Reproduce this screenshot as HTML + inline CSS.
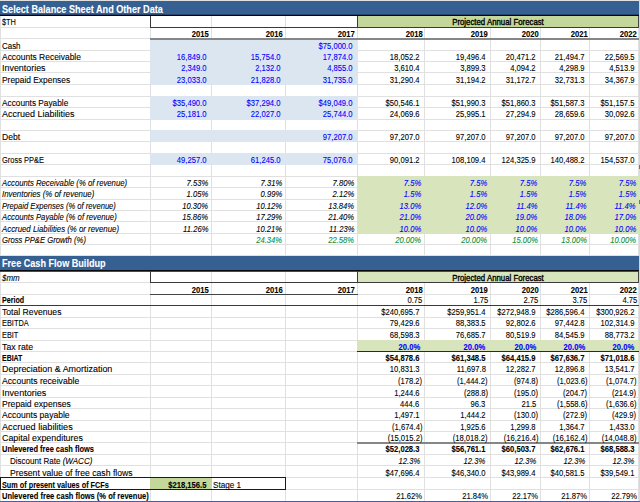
<!DOCTYPE html>
<html><head><meta charset="utf-8"><style>
html,body{margin:0;padding:0;background:#fff;}
body{width:640px;height:502px;position:relative;overflow:hidden;font-family:"Liberation Sans",sans-serif;}
.r{position:absolute;}
.t{position:absolute;white-space:nowrap;line-height:normal;-webkit-text-stroke:0.1px currentColor;}
</style></head><body>
<div class="r" style="left:0px;top:15px;width:640px;height:1px;background:#e0e0e0"></div>
<div class="r" style="left:0px;top:27px;width:640px;height:1px;background:#e0e0e0"></div>
<div class="r" style="left:0px;top:38px;width:640px;height:1px;background:#e0e0e0"></div>
<div class="r" style="left:0px;top:50px;width:640px;height:1px;background:#e0e0e0"></div>
<div class="r" style="left:0px;top:61px;width:640px;height:1px;background:#e0e0e0"></div>
<div class="r" style="left:0px;top:72px;width:640px;height:1px;background:#e0e0e0"></div>
<div class="r" style="left:0px;top:84px;width:640px;height:1px;background:#e0e0e0"></div>
<div class="r" style="left:0px;top:96px;width:640px;height:1px;background:#e0e0e0"></div>
<div class="r" style="left:0px;top:107px;width:640px;height:1px;background:#e0e0e0"></div>
<div class="r" style="left:0px;top:119px;width:640px;height:1px;background:#e0e0e0"></div>
<div class="r" style="left:0px;top:130px;width:640px;height:1px;background:#e0e0e0"></div>
<div class="r" style="left:0px;top:141px;width:640px;height:1px;background:#e0e0e0"></div>
<div class="r" style="left:0px;top:153px;width:640px;height:1px;background:#e0e0e0"></div>
<div class="r" style="left:0px;top:164px;width:640px;height:1px;background:#e0e0e0"></div>
<div class="r" style="left:0px;top:176px;width:640px;height:1px;background:#e0e0e0"></div>
<div class="r" style="left:0px;top:187px;width:640px;height:1px;background:#e0e0e0"></div>
<div class="r" style="left:0px;top:199px;width:640px;height:1px;background:#e0e0e0"></div>
<div class="r" style="left:0px;top:210px;width:640px;height:1px;background:#e0e0e0"></div>
<div class="r" style="left:0px;top:221px;width:640px;height:1px;background:#e0e0e0"></div>
<div class="r" style="left:0px;top:233px;width:640px;height:1px;background:#e0e0e0"></div>
<div class="r" style="left:0px;top:244px;width:640px;height:1px;background:#e0e0e0"></div>
<div class="r" style="left:0px;top:255px;width:640px;height:1px;background:#e0e0e0"></div>
<div class="r" style="left:0px;top:270px;width:640px;height:1px;background:#e0e0e0"></div>
<div class="r" style="left:0px;top:282px;width:640px;height:1px;background:#e0e0e0"></div>
<div class="r" style="left:0px;top:294px;width:640px;height:1px;background:#e0e0e0"></div>
<div class="r" style="left:0px;top:305px;width:640px;height:1px;background:#e0e0e0"></div>
<div class="r" style="left:0px;top:317px;width:640px;height:1px;background:#e0e0e0"></div>
<div class="r" style="left:0px;top:328px;width:640px;height:1px;background:#e0e0e0"></div>
<div class="r" style="left:0px;top:340px;width:640px;height:1px;background:#e0e0e0"></div>
<div class="r" style="left:0px;top:351px;width:640px;height:1px;background:#e0e0e0"></div>
<div class="r" style="left:0px;top:362px;width:640px;height:1px;background:#e0e0e0"></div>
<div class="r" style="left:0px;top:374px;width:640px;height:1px;background:#e0e0e0"></div>
<div class="r" style="left:0px;top:385px;width:640px;height:1px;background:#e0e0e0"></div>
<div class="r" style="left:0px;top:397px;width:640px;height:1px;background:#e0e0e0"></div>
<div class="r" style="left:0px;top:408px;width:640px;height:1px;background:#e0e0e0"></div>
<div class="r" style="left:0px;top:420px;width:640px;height:1px;background:#e0e0e0"></div>
<div class="r" style="left:0px;top:431px;width:640px;height:1px;background:#e0e0e0"></div>
<div class="r" style="left:0px;top:442px;width:640px;height:1px;background:#e0e0e0"></div>
<div class="r" style="left:0px;top:454px;width:640px;height:1px;background:#e0e0e0"></div>
<div class="r" style="left:0px;top:465px;width:640px;height:1px;background:#e0e0e0"></div>
<div class="r" style="left:0px;top:477px;width:640px;height:1px;background:#e0e0e0"></div>
<div class="r" style="left:0px;top:489px;width:640px;height:1px;background:#e0e0e0"></div>
<div class="r" style="left:0px;top:501px;width:640px;height:1px;background:#e0e0e0"></div>
<div class="r" style="left:0px;top:0px;width:640px;height:1px;background:#e0e0e0"></div>
<div class="r" style="left:0px;top:0px;width:1px;height:502px;background:#e0e0e0"></div>
<div class="r" style="left:150px;top:0px;width:1px;height:502px;background:#e0e0e0"></div>
<div class="r" style="left:211px;top:0px;width:1px;height:502px;background:#e0e0e0"></div>
<div class="r" style="left:285px;top:0px;width:1px;height:502px;background:#e0e0e0"></div>
<div class="r" style="left:357px;top:0px;width:1px;height:502px;background:#e0e0e0"></div>
<div class="r" style="left:424px;top:0px;width:1px;height:502px;background:#e0e0e0"></div>
<div class="r" style="left:490px;top:0px;width:1px;height:502px;background:#e0e0e0"></div>
<div class="r" style="left:540px;top:0px;width:1px;height:502px;background:#e0e0e0"></div>
<div class="r" style="left:589px;top:0px;width:1px;height:502px;background:#e0e0e0"></div>
<div class="r" style="left:638px;top:0px;width:1px;height:502px;background:#e0e0e0"></div>
<div class="r" style="left:639px;top:0px;width:1px;height:502px;background:#d6d6d6"></div>
<div class="r" style="left:0px;top:1px;width:639px;height:14px;background:#366092"></div>
<div class="r" style="left:0px;top:14px;width:639px;height:1px;background:#26456e"></div>
<div class="r" style="left:0px;top:15px;width:639px;height:1px;background:#050505"></div>
<div class="r" style="left:0px;top:256px;width:639px;height:14px;background:#366092"></div>
<div class="r" style="left:0px;top:270px;width:639px;height:1px;background:#0a0a0a"></div>
<div class="r" style="left:0px;top:271px;width:639px;height:1px;background:#4a4a4a"></div>
<div class="r" style="left:150px;top:38px;width:208px;height:47px;background:#dce6f1"></div>
<div class="r" style="left:150px;top:96px;width:208px;height:24px;background:#dce6f1"></div>
<div class="r" style="left:150px;top:130px;width:208px;height:12px;background:#dce6f1"></div>
<div class="r" style="left:150px;top:153px;width:208px;height:12px;background:#dce6f1"></div>
<div class="r" style="left:358px;top:16px;width:280px;height:11px;background:#c4d79b"></div>
<div class="r" style="left:150px;top:27px;width:208px;height:1px;background:#3a3a3a"></div>
<div class="r" style="left:150px;top:16px;width:1px;height:12px;background:#3a3a3a"></div>
<div class="r" style="left:357px;top:16px;width:1px;height:12px;background:#3a3a3a"></div>
<div class="r" style="left:358px;top:27px;width:281px;height:1px;background:#3a3a3a"></div>
<div class="r" style="left:638px;top:16px;width:1px;height:12px;background:#444"></div>
<div class="r" style="left:150px;top:38px;width:489px;height:2px;background:#868686"></div>
<div class="r" style="left:357px;top:176px;width:282px;height:58px;background:#d8e4bc"></div>
<div class="r" style="left:358px;top:272px;width:280px;height:10px;background:#d8e4bc"></div>
<div class="r" style="left:150px;top:282px;width:208px;height:1px;background:#3a3a3a"></div>
<div class="r" style="left:150px;top:271px;width:1px;height:12px;background:#3a3a3a"></div>
<div class="r" style="left:357px;top:271px;width:1px;height:12px;background:#3a3a3a"></div>
<div class="r" style="left:358px;top:282px;width:281px;height:1px;background:#3a3a3a"></div>
<div class="r" style="left:638px;top:271px;width:1px;height:12px;background:#444"></div>
<div class="r" style="left:150px;top:294px;width:208px;height:1px;background:#444"></div>
<div class="r" style="left:0px;top:305px;width:639px;height:1px;background:#3a3a3a"></div>
<div class="r" style="left:357px;top:340px;width:282px;height:12px;background:#d8e4bc"></div>
<div class="r" style="left:357px;top:351px;width:282px;height:1px;background:#2a2a2a"></div>
<div class="r" style="left:357px;top:442px;width:282px;height:2px;background:#868686"></div>
<div class="r" style="left:150px;top:477px;width:62px;height:13px;background:#c4d79b"></div>
<div class="r" style="left:0px;top:477px;width:286px;height:1px;background:#1a1a1a"></div>
<div class="r" style="left:0px;top:489px;width:286px;height:1px;background:#1a1a1a"></div>
<div class="r" style="left:0px;top:477px;width:1px;height:13px;background:#1a1a1a"></div>
<div class="r" style="left:285px;top:477px;width:1px;height:13px;background:#1a1a1a"></div>
<div class="r" style="left:639px;top:169px;width:1px;height:64px;background:#d8e4bc"></div>
<div class="r" style="left:639px;top:165px;width:1px;height:4px;background:#3f9a3f"></div>
<div class="r" style="left:639px;top:200px;width:1px;height:4px;background:#3f9a3f"></div>
<div class="r" style="left:639px;top:489px;width:1px;height:12px;background:#d8e4bc"></div>
<div class="r" style="left:0px;top:501px;width:640px;height:1px;background:#3b5bdb"></div>
<div class="t" style="top:3.50px;font-size:10.0px;color:#fff;font-weight:bold;left:2.00px;transform-origin:0 50%;transform:scaleX(0.9122);">Select Balance Sheet And Other Data</div>
<div class="t" style="top:17.30px;font-size:8.9px;color:#000;left:2.00px;transform-origin:0 50%;transform:scaleX(0.8325);">$TH</div>
<div class="t" style="top:17.30px;font-size:8.9px;color:#000;left:497.60px;transform-origin:50% 50%;transform:translateX(-50%) scaleX(0.88);-webkit-text-stroke:0.35px #000;">Projected Annual Forecast</div>
<div class="t" style="top:29.00px;font-size:8.9px;color:#000;font-weight:bold;right:430.80px;transform-origin:100% 50%;transform:scaleX(0.86);">2015</div>
<div class="t" style="top:29.00px;font-size:8.9px;color:#000;font-weight:bold;right:357.00px;transform-origin:100% 50%;transform:scaleX(0.86);">2016</div>
<div class="t" style="top:29.00px;font-size:8.9px;color:#000;font-weight:bold;right:284.80px;transform-origin:100% 50%;transform:scaleX(0.86);">2017</div>
<div class="t" style="top:29.00px;font-size:8.9px;color:#000;font-weight:bold;right:217.70px;transform-origin:100% 50%;transform:scaleX(0.86);">2018</div>
<div class="t" style="top:29.00px;font-size:8.9px;color:#000;font-weight:bold;right:151.90px;transform-origin:100% 50%;transform:scaleX(0.86);">2019</div>
<div class="t" style="top:29.00px;font-size:8.9px;color:#000;font-weight:bold;right:101.50px;transform-origin:100% 50%;transform:scaleX(0.86);">2020</div>
<div class="t" style="top:29.00px;font-size:8.9px;color:#000;font-weight:bold;right:52.50px;transform-origin:100% 50%;transform:scaleX(0.86);">2021</div>
<div class="t" style="top:29.00px;font-size:8.9px;color:#000;font-weight:bold;right:3.10px;transform-origin:100% 50%;transform:scaleX(0.86);">2022</div>
<div class="t" style="top:40.50px;font-size:8.9px;color:#000;left:2.00px;transform-origin:0 50%;transform:scaleX(0.8947);">Cash</div>
<div class="t" style="top:51.60px;font-size:8.9px;color:#000;left:2.00px;transform-origin:0 50%;transform:scaleX(0.952);">Accounts Receivable</div>
<div class="t" style="top:62.90px;font-size:8.9px;color:#000;left:2.00px;transform-origin:0 50%;transform:scaleX(1.0032);">Inventories</div>
<div class="t" style="top:74.60px;font-size:8.9px;color:#000;left:2.00px;transform-origin:0 50%;transform:scaleX(0.9454);">Prepaid Expenses</div>
<div class="t" style="top:97.90px;font-size:8.9px;color:#000;left:2.00px;transform-origin:0 50%;transform:scaleX(0.9327);">Accounts Payable</div>
<div class="t" style="top:109.30px;font-size:8.9px;color:#000;left:2.00px;transform-origin:0 50%;transform:scaleX(1.0129);">Accrued Liabilities</div>
<div class="t" style="top:131.70px;font-size:8.9px;color:#000;left:2.00px;transform-origin:0 50%;transform:scaleX(0.9634);">Debt</div>
<div class="t" style="top:154.70px;font-size:8.9px;color:#000;left:2.00px;transform-origin:0 50%;transform:scaleX(0.8439);">Gross PP&amp;E</div>
<div class="t" style="top:177.80px;font-size:8.9px;color:#000;font-style:italic;left:2.00px;transform-origin:0 50%;transform:scaleX(0.8713);">Accounts Receivable (% of revenue)</div>
<div class="t" style="top:189.30px;font-size:8.9px;color:#000;font-style:italic;left:2.00px;transform-origin:0 50%;transform:scaleX(0.8863);">Inventories (% of revenue)</div>
<div class="t" style="top:200.50px;font-size:8.9px;color:#000;font-style:italic;left:2.00px;transform-origin:0 50%;transform:scaleX(0.8582);">Prepaid Expenses (% of revenue)</div>
<div class="t" style="top:212.00px;font-size:8.9px;color:#000;font-style:italic;left:2.00px;transform-origin:0 50%;transform:scaleX(0.8709);">Accounts Payable (% of revenue)</div>
<div class="t" style="top:223.70px;font-size:8.9px;color:#000;font-style:italic;left:2.00px;transform-origin:0 50%;transform:scaleX(0.8817);">Accrued Liabilities (% or revenue)</div>
<div class="t" style="top:234.80px;font-size:8.9px;color:#000;font-style:italic;left:2.00px;transform-origin:0 50%;transform:scaleX(0.8639);">Gross PP&amp;E Growth (%)</div>
<div class="t" style="top:40.50px;font-size:8.9px;color:#0000ff;right:287.40px;transform-origin:100% 50%;transform:scaleX(0.86);">$75,000.0</div>
<div class="t" style="top:51.60px;font-size:8.9px;color:#0000ff;right:433.40px;transform-origin:100% 50%;transform:scaleX(0.86);">16,849.0</div>
<div class="t" style="top:51.60px;font-size:8.9px;color:#0000ff;right:359.60px;transform-origin:100% 50%;transform:scaleX(0.86);">15,754.0</div>
<div class="t" style="top:51.60px;font-size:8.9px;color:#0000ff;right:287.40px;transform-origin:100% 50%;transform:scaleX(0.86);">17,874.0</div>
<div class="t" style="top:51.60px;font-size:8.9px;color:#000;right:220.30px;transform-origin:100% 50%;transform:scaleX(0.86);">18,052.2</div>
<div class="t" style="top:51.60px;font-size:8.9px;color:#000;right:154.50px;transform-origin:100% 50%;transform:scaleX(0.86);">19,496.4</div>
<div class="t" style="top:51.60px;font-size:8.9px;color:#000;right:104.10px;transform-origin:100% 50%;transform:scaleX(0.86);">20,471.2</div>
<div class="t" style="top:51.60px;font-size:8.9px;color:#000;right:55.10px;transform-origin:100% 50%;transform:scaleX(0.86);">21,494.7</div>
<div class="t" style="top:51.60px;font-size:8.9px;color:#000;right:5.80px;transform-origin:100% 50%;transform:scaleX(0.86);">22,569.5</div>
<div class="t" style="top:62.90px;font-size:8.9px;color:#0000ff;right:433.40px;transform-origin:100% 50%;transform:scaleX(0.86);">2,349.0</div>
<div class="t" style="top:62.90px;font-size:8.9px;color:#0000ff;right:359.60px;transform-origin:100% 50%;transform:scaleX(0.86);">2,132.0</div>
<div class="t" style="top:62.90px;font-size:8.9px;color:#0000ff;right:287.40px;transform-origin:100% 50%;transform:scaleX(0.86);">4,855.0</div>
<div class="t" style="top:62.90px;font-size:8.9px;color:#000;right:220.30px;transform-origin:100% 50%;transform:scaleX(0.86);">3,610.4</div>
<div class="t" style="top:62.90px;font-size:8.9px;color:#000;right:154.50px;transform-origin:100% 50%;transform:scaleX(0.86);">3,899.3</div>
<div class="t" style="top:62.90px;font-size:8.9px;color:#000;right:104.10px;transform-origin:100% 50%;transform:scaleX(0.86);">4,094.2</div>
<div class="t" style="top:62.90px;font-size:8.9px;color:#000;right:55.10px;transform-origin:100% 50%;transform:scaleX(0.86);">4,298.9</div>
<div class="t" style="top:62.90px;font-size:8.9px;color:#000;right:5.80px;transform-origin:100% 50%;transform:scaleX(0.86);">4,513.9</div>
<div class="t" style="top:74.60px;font-size:8.9px;color:#0000ff;right:433.40px;transform-origin:100% 50%;transform:scaleX(0.86);">23,033.0</div>
<div class="t" style="top:74.60px;font-size:8.9px;color:#0000ff;right:359.60px;transform-origin:100% 50%;transform:scaleX(0.86);">21,828.0</div>
<div class="t" style="top:74.60px;font-size:8.9px;color:#0000ff;right:287.40px;transform-origin:100% 50%;transform:scaleX(0.86);">31,735.0</div>
<div class="t" style="top:74.60px;font-size:8.9px;color:#000;right:220.30px;transform-origin:100% 50%;transform:scaleX(0.86);">31,290.4</div>
<div class="t" style="top:74.60px;font-size:8.9px;color:#000;right:154.50px;transform-origin:100% 50%;transform:scaleX(0.86);">31,194.2</div>
<div class="t" style="top:74.60px;font-size:8.9px;color:#000;right:104.10px;transform-origin:100% 50%;transform:scaleX(0.86);">31,172.7</div>
<div class="t" style="top:74.60px;font-size:8.9px;color:#000;right:55.10px;transform-origin:100% 50%;transform:scaleX(0.86);">32,731.3</div>
<div class="t" style="top:74.60px;font-size:8.9px;color:#000;right:5.80px;transform-origin:100% 50%;transform:scaleX(0.86);">34,367.9</div>
<div class="t" style="top:97.90px;font-size:8.9px;color:#0000ff;right:433.40px;transform-origin:100% 50%;transform:scaleX(0.86);">$35,490.0</div>
<div class="t" style="top:97.90px;font-size:8.9px;color:#0000ff;right:359.60px;transform-origin:100% 50%;transform:scaleX(0.86);">$37,294.0</div>
<div class="t" style="top:97.90px;font-size:8.9px;color:#0000ff;right:287.40px;transform-origin:100% 50%;transform:scaleX(0.86);">$49,049.0</div>
<div class="t" style="top:97.90px;font-size:8.9px;color:#000;right:220.30px;transform-origin:100% 50%;transform:scaleX(0.86);">$50,546.1</div>
<div class="t" style="top:97.90px;font-size:8.9px;color:#000;right:154.50px;transform-origin:100% 50%;transform:scaleX(0.86);">$51,990.3</div>
<div class="t" style="top:97.90px;font-size:8.9px;color:#000;right:104.10px;transform-origin:100% 50%;transform:scaleX(0.86);">$51,860.3</div>
<div class="t" style="top:97.90px;font-size:8.9px;color:#000;right:55.10px;transform-origin:100% 50%;transform:scaleX(0.86);">$51,587.3</div>
<div class="t" style="top:97.90px;font-size:8.9px;color:#000;right:5.80px;transform-origin:100% 50%;transform:scaleX(0.86);">$51,157.5</div>
<div class="t" style="top:109.30px;font-size:8.9px;color:#0000ff;right:433.40px;transform-origin:100% 50%;transform:scaleX(0.86);">25,181.0</div>
<div class="t" style="top:109.30px;font-size:8.9px;color:#0000ff;right:359.60px;transform-origin:100% 50%;transform:scaleX(0.86);">22,027.0</div>
<div class="t" style="top:109.30px;font-size:8.9px;color:#0000ff;right:287.40px;transform-origin:100% 50%;transform:scaleX(0.86);">25,744.0</div>
<div class="t" style="top:109.30px;font-size:8.9px;color:#000;right:220.30px;transform-origin:100% 50%;transform:scaleX(0.86);">24,069.6</div>
<div class="t" style="top:109.30px;font-size:8.9px;color:#000;right:154.50px;transform-origin:100% 50%;transform:scaleX(0.86);">25,995.1</div>
<div class="t" style="top:109.30px;font-size:8.9px;color:#000;right:104.10px;transform-origin:100% 50%;transform:scaleX(0.86);">27,294.9</div>
<div class="t" style="top:109.30px;font-size:8.9px;color:#000;right:55.10px;transform-origin:100% 50%;transform:scaleX(0.86);">28,659.6</div>
<div class="t" style="top:109.30px;font-size:8.9px;color:#000;right:5.80px;transform-origin:100% 50%;transform:scaleX(0.86);">30,092.6</div>
<div class="t" style="top:131.70px;font-size:8.9px;color:#0000ff;right:287.40px;transform-origin:100% 50%;transform:scaleX(0.86);">97,207.0</div>
<div class="t" style="top:131.70px;font-size:8.9px;color:#000;right:220.30px;transform-origin:100% 50%;transform:scaleX(0.86);">97,207.0</div>
<div class="t" style="top:131.70px;font-size:8.9px;color:#000;right:154.50px;transform-origin:100% 50%;transform:scaleX(0.86);">97,207.0</div>
<div class="t" style="top:131.70px;font-size:8.9px;color:#000;right:104.10px;transform-origin:100% 50%;transform:scaleX(0.86);">97,207.0</div>
<div class="t" style="top:131.70px;font-size:8.9px;color:#000;right:55.10px;transform-origin:100% 50%;transform:scaleX(0.86);">97,207.0</div>
<div class="t" style="top:131.70px;font-size:8.9px;color:#000;right:5.80px;transform-origin:100% 50%;transform:scaleX(0.86);">97,207.0</div>
<div class="t" style="top:154.70px;font-size:8.9px;color:#0000ff;right:433.40px;transform-origin:100% 50%;transform:scaleX(0.86);">49,257.0</div>
<div class="t" style="top:154.70px;font-size:8.9px;color:#0000ff;right:359.60px;transform-origin:100% 50%;transform:scaleX(0.86);">61,245.0</div>
<div class="t" style="top:154.70px;font-size:8.9px;color:#0000ff;right:287.40px;transform-origin:100% 50%;transform:scaleX(0.86);">75,076.0</div>
<div class="t" style="top:154.70px;font-size:8.9px;color:#000;right:220.30px;transform-origin:100% 50%;transform:scaleX(0.86);">90,091.2</div>
<div class="t" style="top:154.70px;font-size:8.9px;color:#000;right:154.50px;transform-origin:100% 50%;transform:scaleX(0.86);">108,109.4</div>
<div class="t" style="top:154.70px;font-size:8.9px;color:#000;right:104.10px;transform-origin:100% 50%;transform:scaleX(0.86);">124,325.9</div>
<div class="t" style="top:154.70px;font-size:8.9px;color:#000;right:55.10px;transform-origin:100% 50%;transform:scaleX(0.86);">140,488.2</div>
<div class="t" style="top:154.70px;font-size:8.9px;color:#000;right:5.80px;transform-origin:100% 50%;transform:scaleX(0.86);">154,537.0</div>
<div class="t" style="top:177.80px;font-size:8.9px;color:#000;font-style:italic;right:431.70px;transform-origin:100% 50%;transform:scaleX(0.86);">7.53%</div>
<div class="t" style="top:177.80px;font-size:8.9px;color:#000;font-style:italic;right:357.90px;transform-origin:100% 50%;transform:scaleX(0.86);">7.31%</div>
<div class="t" style="top:177.80px;font-size:8.9px;color:#000;font-style:italic;right:285.70px;transform-origin:100% 50%;transform:scaleX(0.86);">7.80%</div>
<div class="t" style="top:177.80px;font-size:8.9px;color:#0000ff;font-style:italic;right:218.60px;transform-origin:100% 50%;transform:scaleX(0.86);">7.5%</div>
<div class="t" style="top:177.80px;font-size:8.9px;color:#0000ff;font-style:italic;right:152.80px;transform-origin:100% 50%;transform:scaleX(0.86);">7.5%</div>
<div class="t" style="top:177.80px;font-size:8.9px;color:#0000ff;font-style:italic;right:102.40px;transform-origin:100% 50%;transform:scaleX(0.86);">7.5%</div>
<div class="t" style="top:177.80px;font-size:8.9px;color:#0000ff;font-style:italic;right:53.40px;transform-origin:100% 50%;transform:scaleX(0.86);">7.5%</div>
<div class="t" style="top:177.80px;font-size:8.9px;color:#0000ff;font-style:italic;right:4.10px;transform-origin:100% 50%;transform:scaleX(0.86);">7.5%</div>
<div class="t" style="top:189.30px;font-size:8.9px;color:#000;font-style:italic;right:431.70px;transform-origin:100% 50%;transform:scaleX(0.86);">1.05%</div>
<div class="t" style="top:189.30px;font-size:8.9px;color:#000;font-style:italic;right:357.90px;transform-origin:100% 50%;transform:scaleX(0.86);">0.99%</div>
<div class="t" style="top:189.30px;font-size:8.9px;color:#000;font-style:italic;right:285.70px;transform-origin:100% 50%;transform:scaleX(0.86);">2.12%</div>
<div class="t" style="top:189.30px;font-size:8.9px;color:#0000ff;font-style:italic;right:218.60px;transform-origin:100% 50%;transform:scaleX(0.86);">1.5%</div>
<div class="t" style="top:189.30px;font-size:8.9px;color:#0000ff;font-style:italic;right:152.80px;transform-origin:100% 50%;transform:scaleX(0.86);">1.5%</div>
<div class="t" style="top:189.30px;font-size:8.9px;color:#0000ff;font-style:italic;right:102.40px;transform-origin:100% 50%;transform:scaleX(0.86);">1.5%</div>
<div class="t" style="top:189.30px;font-size:8.9px;color:#0000ff;font-style:italic;right:53.40px;transform-origin:100% 50%;transform:scaleX(0.86);">1.5%</div>
<div class="t" style="top:189.30px;font-size:8.9px;color:#0000ff;font-style:italic;right:4.10px;transform-origin:100% 50%;transform:scaleX(0.86);">1.5%</div>
<div class="t" style="top:200.50px;font-size:8.9px;color:#000;font-style:italic;right:431.70px;transform-origin:100% 50%;transform:scaleX(0.86);">10.30%</div>
<div class="t" style="top:200.50px;font-size:8.9px;color:#000;font-style:italic;right:357.90px;transform-origin:100% 50%;transform:scaleX(0.86);">10.12%</div>
<div class="t" style="top:200.50px;font-size:8.9px;color:#000;font-style:italic;right:285.70px;transform-origin:100% 50%;transform:scaleX(0.86);">13.84%</div>
<div class="t" style="top:200.50px;font-size:8.9px;color:#0000ff;font-style:italic;right:218.60px;transform-origin:100% 50%;transform:scaleX(0.86);">13.0%</div>
<div class="t" style="top:200.50px;font-size:8.9px;color:#0000ff;font-style:italic;right:152.80px;transform-origin:100% 50%;transform:scaleX(0.86);">12.0%</div>
<div class="t" style="top:200.50px;font-size:8.9px;color:#0000ff;font-style:italic;right:102.40px;transform-origin:100% 50%;transform:scaleX(0.86);">11.4%</div>
<div class="t" style="top:200.50px;font-size:8.9px;color:#0000ff;font-style:italic;right:53.40px;transform-origin:100% 50%;transform:scaleX(0.86);">11.4%</div>
<div class="t" style="top:200.50px;font-size:8.9px;color:#0000ff;font-style:italic;right:4.10px;transform-origin:100% 50%;transform:scaleX(0.86);">11.4%</div>
<div class="t" style="top:212.00px;font-size:8.9px;color:#000;font-style:italic;right:431.70px;transform-origin:100% 50%;transform:scaleX(0.86);">15.86%</div>
<div class="t" style="top:212.00px;font-size:8.9px;color:#000;font-style:italic;right:357.90px;transform-origin:100% 50%;transform:scaleX(0.86);">17.29%</div>
<div class="t" style="top:212.00px;font-size:8.9px;color:#000;font-style:italic;right:285.70px;transform-origin:100% 50%;transform:scaleX(0.86);">21.40%</div>
<div class="t" style="top:212.00px;font-size:8.9px;color:#0000ff;font-style:italic;right:218.60px;transform-origin:100% 50%;transform:scaleX(0.86);">21.0%</div>
<div class="t" style="top:212.00px;font-size:8.9px;color:#0000ff;font-style:italic;right:152.80px;transform-origin:100% 50%;transform:scaleX(0.86);">20.0%</div>
<div class="t" style="top:212.00px;font-size:8.9px;color:#0000ff;font-style:italic;right:102.40px;transform-origin:100% 50%;transform:scaleX(0.86);">19.0%</div>
<div class="t" style="top:212.00px;font-size:8.9px;color:#0000ff;font-style:italic;right:53.40px;transform-origin:100% 50%;transform:scaleX(0.86);">18.0%</div>
<div class="t" style="top:212.00px;font-size:8.9px;color:#0000ff;font-style:italic;right:4.10px;transform-origin:100% 50%;transform:scaleX(0.86);">17.0%</div>
<div class="t" style="top:223.70px;font-size:8.9px;color:#000;font-style:italic;right:431.70px;transform-origin:100% 50%;transform:scaleX(0.86);">11.26%</div>
<div class="t" style="top:223.70px;font-size:8.9px;color:#000;font-style:italic;right:357.90px;transform-origin:100% 50%;transform:scaleX(0.86);">10.21%</div>
<div class="t" style="top:223.70px;font-size:8.9px;color:#000;font-style:italic;right:285.70px;transform-origin:100% 50%;transform:scaleX(0.86);">11.23%</div>
<div class="t" style="top:223.70px;font-size:8.9px;color:#0000ff;font-style:italic;right:218.60px;transform-origin:100% 50%;transform:scaleX(0.86);">10.0%</div>
<div class="t" style="top:223.70px;font-size:8.9px;color:#0000ff;font-style:italic;right:152.80px;transform-origin:100% 50%;transform:scaleX(0.86);">10.0%</div>
<div class="t" style="top:223.70px;font-size:8.9px;color:#0000ff;font-style:italic;right:102.40px;transform-origin:100% 50%;transform:scaleX(0.86);">10.0%</div>
<div class="t" style="top:223.70px;font-size:8.9px;color:#0000ff;font-style:italic;right:53.40px;transform-origin:100% 50%;transform:scaleX(0.86);">10.0%</div>
<div class="t" style="top:223.70px;font-size:8.9px;color:#0000ff;font-style:italic;right:4.10px;transform-origin:100% 50%;transform:scaleX(0.86);">10.0%</div>
<div class="t" style="top:234.80px;font-size:8.9px;color:#0a8f34;font-style:italic;right:357.90px;transform-origin:100% 50%;transform:scaleX(0.86);">24.34%</div>
<div class="t" style="top:234.80px;font-size:8.9px;color:#0a8f34;font-style:italic;right:285.70px;transform-origin:100% 50%;transform:scaleX(0.86);">22.58%</div>
<div class="t" style="top:234.80px;font-size:8.9px;color:#0a8f34;font-style:italic;right:218.60px;transform-origin:100% 50%;transform:scaleX(0.86);">20.00%</div>
<div class="t" style="top:234.80px;font-size:8.9px;color:#0a8f34;font-style:italic;right:152.80px;transform-origin:100% 50%;transform:scaleX(0.86);">20.00%</div>
<div class="t" style="top:234.80px;font-size:8.9px;color:#0a8f34;font-style:italic;right:102.40px;transform-origin:100% 50%;transform:scaleX(0.86);">15.00%</div>
<div class="t" style="top:234.80px;font-size:8.9px;color:#0a8f34;font-style:italic;right:53.40px;transform-origin:100% 50%;transform:scaleX(0.86);">13.00%</div>
<div class="t" style="top:234.80px;font-size:8.9px;color:#0a8f34;font-style:italic;right:4.10px;transform-origin:100% 50%;transform:scaleX(0.86);">10.00%</div>
<div class="t" style="top:258.40px;font-size:10.0px;color:#fff;font-weight:bold;left:2.00px;transform-origin:0 50%;transform:scaleX(0.9094);">Free Cash Flow Buildup</div>
<div class="t" style="top:272.70px;font-size:8.9px;color:#000;font-style:italic;left:2.00px;transform-origin:0 50%;transform:scaleX(0.8947);">$mm</div>
<div class="t" style="top:272.70px;font-size:8.9px;color:#000;left:497.60px;transform-origin:50% 50%;transform:translateX(-50%) scaleX(0.88);-webkit-text-stroke:0.35px #000;">Projected Annual Forecast</div>
<div class="t" style="top:284.50px;font-size:8.9px;color:#000;font-weight:bold;right:430.80px;transform-origin:100% 50%;transform:scaleX(0.86);">2015</div>
<div class="t" style="top:284.50px;font-size:8.9px;color:#000;font-weight:bold;right:357.00px;transform-origin:100% 50%;transform:scaleX(0.86);">2016</div>
<div class="t" style="top:284.50px;font-size:8.9px;color:#000;font-weight:bold;right:284.80px;transform-origin:100% 50%;transform:scaleX(0.86);">2017</div>
<div class="t" style="top:284.50px;font-size:8.9px;color:#000;font-weight:bold;right:217.70px;transform-origin:100% 50%;transform:scaleX(0.86);">2018</div>
<div class="t" style="top:284.50px;font-size:8.9px;color:#000;font-weight:bold;right:151.90px;transform-origin:100% 50%;transform:scaleX(0.86);">2019</div>
<div class="t" style="top:284.50px;font-size:8.9px;color:#000;font-weight:bold;right:101.50px;transform-origin:100% 50%;transform:scaleX(0.86);">2020</div>
<div class="t" style="top:284.50px;font-size:8.9px;color:#000;font-weight:bold;right:52.50px;transform-origin:100% 50%;transform:scaleX(0.86);">2021</div>
<div class="t" style="top:284.50px;font-size:8.9px;color:#000;font-weight:bold;right:3.10px;transform-origin:100% 50%;transform:scaleX(0.86);">2022</div>
<div class="t" style="top:295.40px;font-size:8.9px;color:#000;font-weight:bold;left:2.00px;transform-origin:0 50%;transform:scaleX(0.8006);">Period</div>
<div class="t" style="top:307.10px;font-size:8.9px;color:#000;left:2.00px;transform-origin:0 50%;transform:scaleX(0.9718);">Total Revenues</div>
<div class="t" style="top:318.40px;font-size:8.9px;color:#000;left:2.00px;transform-origin:0 50%;transform:scaleX(0.8305);">EBITDA</div>
<div class="t" style="top:330.10px;font-size:8.9px;color:#000;left:2.00px;transform-origin:0 50%;transform:scaleX(0.8301);">EBIT</div>
<div class="t" style="top:341.70px;font-size:8.9px;color:#000;left:2.00px;transform-origin:0 50%;transform:scaleX(0.9864);">Tax rate</div>
<div class="t" style="top:352.70px;font-size:8.9px;color:#000;font-weight:bold;left:2.00px;transform-origin:0 50%;transform:scaleX(0.7824);">EBIAT</div>
<div class="t" style="top:364.40px;font-size:8.9px;color:#000;left:2.00px;transform-origin:0 50%;transform:scaleX(1.0076);">Depreciation &amp; Amortization</div>
<div class="t" style="top:375.90px;font-size:8.9px;color:#000;left:2.00px;transform-origin:0 50%;transform:scaleX(0.9722);">Accounts receivable</div>
<div class="t" style="top:387.80px;font-size:8.9px;color:#000;left:2.00px;transform-origin:0 50%;transform:scaleX(1.0218);">Inventories</div>
<div class="t" style="top:398.60px;font-size:8.9px;color:#000;left:2.00px;transform-origin:0 50%;transform:scaleX(0.9689);">Prepaid expenses</div>
<div class="t" style="top:410.20px;font-size:8.9px;color:#000;left:2.00px;transform-origin:0 50%;transform:scaleX(0.9651);">Accounts payable</div>
<div class="t" style="top:421.70px;font-size:8.9px;color:#000;left:2.00px;transform-origin:0 50%;transform:scaleX(1.0322);">Accrued liabilities</div>
<div class="t" style="top:432.90px;font-size:8.9px;color:#000;left:2.00px;transform-origin:0 50%;transform:scaleX(0.9994);">Capital expenditures</div>
<div class="t" style="top:444.40px;font-size:8.9px;color:#000;font-weight:bold;left:2.00px;transform-origin:0 50%;transform:scaleX(0.8397);">Unlevered free cash flows</div>
<div class="t" style="top:479.60px;font-size:8.9px;color:#000;font-weight:bold;left:2.00px;transform-origin:0 50%;transform:scaleX(0.8202);">Sum of present values of FCFs</div>
<div class="t" style="top:491.30px;font-size:8.9px;color:#000;font-weight:bold;left:2.00px;transform-origin:0 50%;transform:scaleX(0.8472);">Unlevered free cash flows (% of revenue)</div>
<div class="t" style="top:456.00px;font-size:8.9px;color:#000;left:9.80px;transform-origin:0 50%;transform:scaleX(0.9042);">Discount Rate <i>(WACC)</i></div>
<div class="t" style="top:467.90px;font-size:8.9px;color:#000;left:9.80px;transform-origin:0 50%;transform:scaleX(0.9747);">Present value of free cash flows</div>
<div class="t" style="top:295.40px;font-size:8.9px;color:#000;right:217.70px;transform-origin:100% 50%;transform:scaleX(0.86);">0.75</div>
<div class="t" style="top:295.40px;font-size:8.9px;color:#000;right:151.90px;transform-origin:100% 50%;transform:scaleX(0.86);">1.75</div>
<div class="t" style="top:295.40px;font-size:8.9px;color:#000;right:101.50px;transform-origin:100% 50%;transform:scaleX(0.86);">2.75</div>
<div class="t" style="top:295.40px;font-size:8.9px;color:#000;right:52.50px;transform-origin:100% 50%;transform:scaleX(0.86);">3.75</div>
<div class="t" style="top:295.40px;font-size:8.9px;color:#000;right:3.20px;transform-origin:100% 50%;transform:scaleX(0.86);">4.75</div>
<div class="t" style="top:307.10px;font-size:8.9px;color:#000;right:220.30px;transform-origin:100% 50%;transform:scaleX(0.86);">$240,695.7</div>
<div class="t" style="top:307.10px;font-size:8.9px;color:#000;right:154.50px;transform-origin:100% 50%;transform:scaleX(0.86);">$259,951.4</div>
<div class="t" style="top:307.10px;font-size:8.9px;color:#000;right:104.10px;transform-origin:100% 50%;transform:scaleX(0.86);">$272,948.9</div>
<div class="t" style="top:307.10px;font-size:8.9px;color:#000;right:55.10px;transform-origin:100% 50%;transform:scaleX(0.86);">$286,596.4</div>
<div class="t" style="top:307.10px;font-size:8.9px;color:#000;right:5.80px;transform-origin:100% 50%;transform:scaleX(0.86);">$300,926.2</div>
<div class="t" style="top:318.40px;font-size:8.9px;color:#000;right:220.30px;transform-origin:100% 50%;transform:scaleX(0.86);">79,429.6</div>
<div class="t" style="top:318.40px;font-size:8.9px;color:#000;right:154.50px;transform-origin:100% 50%;transform:scaleX(0.86);">88,383.5</div>
<div class="t" style="top:318.40px;font-size:8.9px;color:#000;right:104.10px;transform-origin:100% 50%;transform:scaleX(0.86);">92,802.6</div>
<div class="t" style="top:318.40px;font-size:8.9px;color:#000;right:55.10px;transform-origin:100% 50%;transform:scaleX(0.86);">97,442.8</div>
<div class="t" style="top:318.40px;font-size:8.9px;color:#000;right:5.80px;transform-origin:100% 50%;transform:scaleX(0.86);">102,314.9</div>
<div class="t" style="top:330.10px;font-size:8.9px;color:#000;right:220.30px;transform-origin:100% 50%;transform:scaleX(0.86);">68,598.3</div>
<div class="t" style="top:330.10px;font-size:8.9px;color:#000;right:154.50px;transform-origin:100% 50%;transform:scaleX(0.86);">76,685.7</div>
<div class="t" style="top:330.10px;font-size:8.9px;color:#000;right:104.10px;transform-origin:100% 50%;transform:scaleX(0.86);">80,519.9</div>
<div class="t" style="top:330.10px;font-size:8.9px;color:#000;right:55.10px;transform-origin:100% 50%;transform:scaleX(0.86);">84,545.9</div>
<div class="t" style="top:330.10px;font-size:8.9px;color:#000;right:5.80px;transform-origin:100% 50%;transform:scaleX(0.86);">88,773.2</div>
<div class="t" style="top:341.70px;font-size:8.9px;color:#0000ff;font-weight:bold;right:220.30px;transform-origin:100% 50%;transform:scaleX(0.86);">20.0%</div>
<div class="t" style="top:341.70px;font-size:8.9px;color:#0000ff;font-weight:bold;right:154.50px;transform-origin:100% 50%;transform:scaleX(0.86);">20.0%</div>
<div class="t" style="top:341.70px;font-size:8.9px;color:#0000ff;font-weight:bold;right:104.10px;transform-origin:100% 50%;transform:scaleX(0.86);">20.0%</div>
<div class="t" style="top:341.70px;font-size:8.9px;color:#0000ff;font-weight:bold;right:55.10px;transform-origin:100% 50%;transform:scaleX(0.86);">20.0%</div>
<div class="t" style="top:341.70px;font-size:8.9px;color:#0000ff;font-weight:bold;right:5.80px;transform-origin:100% 50%;transform:scaleX(0.86);">20.0%</div>
<div class="t" style="top:352.70px;font-size:8.9px;color:#000;font-weight:bold;right:220.30px;transform-origin:100% 50%;transform:scaleX(0.86);">$54,878.6</div>
<div class="t" style="top:352.70px;font-size:8.9px;color:#000;font-weight:bold;right:154.50px;transform-origin:100% 50%;transform:scaleX(0.86);">$61,348.5</div>
<div class="t" style="top:352.70px;font-size:8.9px;color:#000;font-weight:bold;right:104.10px;transform-origin:100% 50%;transform:scaleX(0.86);">$64,415.9</div>
<div class="t" style="top:352.70px;font-size:8.9px;color:#000;font-weight:bold;right:55.10px;transform-origin:100% 50%;transform:scaleX(0.86);">$67,636.7</div>
<div class="t" style="top:352.70px;font-size:8.9px;color:#000;font-weight:bold;right:5.80px;transform-origin:100% 50%;transform:scaleX(0.86);">$71,018.6</div>
<div class="t" style="top:364.40px;font-size:8.9px;color:#000;right:220.30px;transform-origin:100% 50%;transform:scaleX(0.86);">10,831.3</div>
<div class="t" style="top:364.40px;font-size:8.9px;color:#000;right:154.50px;transform-origin:100% 50%;transform:scaleX(0.86);">11,697.8</div>
<div class="t" style="top:364.40px;font-size:8.9px;color:#000;right:104.10px;transform-origin:100% 50%;transform:scaleX(0.86);">12,282.7</div>
<div class="t" style="top:364.40px;font-size:8.9px;color:#000;right:55.10px;transform-origin:100% 50%;transform:scaleX(0.86);">12,896.8</div>
<div class="t" style="top:364.40px;font-size:8.9px;color:#000;right:5.80px;transform-origin:100% 50%;transform:scaleX(0.86);">13,541.7</div>
<div class="t" style="top:375.90px;font-size:8.9px;color:#000;right:217.90px;transform-origin:100% 50%;transform:scaleX(0.86);">(178.2)</div>
<div class="t" style="top:375.90px;font-size:8.9px;color:#000;right:152.10px;transform-origin:100% 50%;transform:scaleX(0.86);">(1,444.2)</div>
<div class="t" style="top:375.90px;font-size:8.9px;color:#000;right:101.70px;transform-origin:100% 50%;transform:scaleX(0.86);">(974.8)</div>
<div class="t" style="top:375.90px;font-size:8.9px;color:#000;right:52.70px;transform-origin:100% 50%;transform:scaleX(0.86);">(1,023.6)</div>
<div class="t" style="top:375.90px;font-size:8.9px;color:#000;right:3.40px;transform-origin:100% 50%;transform:scaleX(0.86);">(1,074.7)</div>
<div class="t" style="top:387.80px;font-size:8.9px;color:#000;right:220.30px;transform-origin:100% 50%;transform:scaleX(0.86);">1,244.6</div>
<div class="t" style="top:387.80px;font-size:8.9px;color:#000;right:152.10px;transform-origin:100% 50%;transform:scaleX(0.86);">(288.8)</div>
<div class="t" style="top:387.80px;font-size:8.9px;color:#000;right:101.70px;transform-origin:100% 50%;transform:scaleX(0.86);">(195.0)</div>
<div class="t" style="top:387.80px;font-size:8.9px;color:#000;right:52.70px;transform-origin:100% 50%;transform:scaleX(0.86);">(204.7)</div>
<div class="t" style="top:387.80px;font-size:8.9px;color:#000;right:3.40px;transform-origin:100% 50%;transform:scaleX(0.86);">(214.9)</div>
<div class="t" style="top:398.60px;font-size:8.9px;color:#000;right:220.30px;transform-origin:100% 50%;transform:scaleX(0.86);">444.6</div>
<div class="t" style="top:398.60px;font-size:8.9px;color:#000;right:154.50px;transform-origin:100% 50%;transform:scaleX(0.86);">96.3</div>
<div class="t" style="top:398.60px;font-size:8.9px;color:#000;right:104.10px;transform-origin:100% 50%;transform:scaleX(0.86);">21.5</div>
<div class="t" style="top:398.60px;font-size:8.9px;color:#000;right:52.70px;transform-origin:100% 50%;transform:scaleX(0.86);">(1,558.6)</div>
<div class="t" style="top:398.60px;font-size:8.9px;color:#000;right:3.40px;transform-origin:100% 50%;transform:scaleX(0.86);">(1,636.6)</div>
<div class="t" style="top:410.20px;font-size:8.9px;color:#000;right:220.30px;transform-origin:100% 50%;transform:scaleX(0.86);">1,497.1</div>
<div class="t" style="top:410.20px;font-size:8.9px;color:#000;right:154.50px;transform-origin:100% 50%;transform:scaleX(0.86);">1,444.2</div>
<div class="t" style="top:410.20px;font-size:8.9px;color:#000;right:101.70px;transform-origin:100% 50%;transform:scaleX(0.86);">(130.0)</div>
<div class="t" style="top:410.20px;font-size:8.9px;color:#000;right:52.70px;transform-origin:100% 50%;transform:scaleX(0.86);">(272.9)</div>
<div class="t" style="top:410.20px;font-size:8.9px;color:#000;right:3.40px;transform-origin:100% 50%;transform:scaleX(0.86);">(429.9)</div>
<div class="t" style="top:421.70px;font-size:8.9px;color:#000;right:217.90px;transform-origin:100% 50%;transform:scaleX(0.86);">(1,674.4)</div>
<div class="t" style="top:421.70px;font-size:8.9px;color:#000;right:154.50px;transform-origin:100% 50%;transform:scaleX(0.86);">1,925.6</div>
<div class="t" style="top:421.70px;font-size:8.9px;color:#000;right:104.10px;transform-origin:100% 50%;transform:scaleX(0.86);">1,299.8</div>
<div class="t" style="top:421.70px;font-size:8.9px;color:#000;right:55.10px;transform-origin:100% 50%;transform:scaleX(0.86);">1,364.7</div>
<div class="t" style="top:421.70px;font-size:8.9px;color:#000;right:5.80px;transform-origin:100% 50%;transform:scaleX(0.86);">1,433.0</div>
<div class="t" style="top:432.90px;font-size:8.9px;color:#000;right:217.90px;transform-origin:100% 50%;transform:scaleX(0.86);">(15,015.2)</div>
<div class="t" style="top:432.90px;font-size:8.9px;color:#000;right:152.10px;transform-origin:100% 50%;transform:scaleX(0.86);">(18,018.2)</div>
<div class="t" style="top:432.90px;font-size:8.9px;color:#000;right:101.70px;transform-origin:100% 50%;transform:scaleX(0.86);">(16,216.4)</div>
<div class="t" style="top:432.90px;font-size:8.9px;color:#000;right:52.70px;transform-origin:100% 50%;transform:scaleX(0.86);">(16,162.4)</div>
<div class="t" style="top:432.90px;font-size:8.9px;color:#000;right:3.40px;transform-origin:100% 50%;transform:scaleX(0.86);">(14,048.8)</div>
<div class="t" style="top:444.40px;font-size:8.9px;color:#000;font-weight:bold;right:220.30px;transform-origin:100% 50%;transform:scaleX(0.86);">$52,028.3</div>
<div class="t" style="top:444.40px;font-size:8.9px;color:#000;font-weight:bold;right:154.50px;transform-origin:100% 50%;transform:scaleX(0.86);">$56,761.1</div>
<div class="t" style="top:444.40px;font-size:8.9px;color:#000;font-weight:bold;right:104.10px;transform-origin:100% 50%;transform:scaleX(0.86);">$60,503.7</div>
<div class="t" style="top:444.40px;font-size:8.9px;color:#000;font-weight:bold;right:55.10px;transform-origin:100% 50%;transform:scaleX(0.86);">$62,676.1</div>
<div class="t" style="top:444.40px;font-size:8.9px;color:#000;font-weight:bold;right:5.80px;transform-origin:100% 50%;transform:scaleX(0.86);">$68,588.3</div>
<div class="t" style="top:456.00px;font-size:8.9px;color:#000;font-style:italic;right:220.30px;transform-origin:100% 50%;transform:scaleX(0.86);">12.3%</div>
<div class="t" style="top:456.00px;font-size:8.9px;color:#000;font-style:italic;right:154.50px;transform-origin:100% 50%;transform:scaleX(0.86);">12.3%</div>
<div class="t" style="top:456.00px;font-size:8.9px;color:#000;font-style:italic;right:104.10px;transform-origin:100% 50%;transform:scaleX(0.86);">12.3%</div>
<div class="t" style="top:456.00px;font-size:8.9px;color:#000;font-style:italic;right:55.10px;transform-origin:100% 50%;transform:scaleX(0.86);">12.3%</div>
<div class="t" style="top:456.00px;font-size:8.9px;color:#000;font-style:italic;right:5.80px;transform-origin:100% 50%;transform:scaleX(0.86);">12.3%</div>
<div class="t" style="top:467.90px;font-size:8.9px;color:#000;right:220.30px;transform-origin:100% 50%;transform:scaleX(0.86);">$47,696.4</div>
<div class="t" style="top:467.90px;font-size:8.9px;color:#000;right:154.50px;transform-origin:100% 50%;transform:scaleX(0.86);">$46,340.0</div>
<div class="t" style="top:467.90px;font-size:8.9px;color:#000;right:104.10px;transform-origin:100% 50%;transform:scaleX(0.86);">$43,989.4</div>
<div class="t" style="top:467.90px;font-size:8.9px;color:#000;right:55.10px;transform-origin:100% 50%;transform:scaleX(0.86);">$40,581.5</div>
<div class="t" style="top:467.90px;font-size:8.9px;color:#000;right:5.80px;transform-origin:100% 50%;transform:scaleX(0.86);">$39,549.1</div>
<div class="t" style="top:479.60px;font-size:8.9px;color:#000;font-weight:bold;right:433.40px;transform-origin:100% 50%;transform:scaleX(0.86);">$218,156.5</div>
<div class="t" style="top:479.60px;font-size:8.9px;color:#000;left:212.60px;transform-origin:0 50%;transform:scaleX(0.92);">Stage 1</div>
<div class="t" style="top:491.30px;font-size:8.9px;color:#000;right:217.70px;transform-origin:100% 50%;transform:scaleX(0.86);">21.62%</div>
<div class="t" style="top:491.30px;font-size:8.9px;color:#000;right:151.90px;transform-origin:100% 50%;transform:scaleX(0.86);">21.84%</div>
<div class="t" style="top:491.30px;font-size:8.9px;color:#000;right:101.50px;transform-origin:100% 50%;transform:scaleX(0.86);">22.17%</div>
<div class="t" style="top:491.30px;font-size:8.9px;color:#000;right:52.50px;transform-origin:100% 50%;transform:scaleX(0.86);">21.87%</div>
<div class="t" style="top:491.30px;font-size:8.9px;color:#000;right:3.20px;transform-origin:100% 50%;transform:scaleX(0.86);">22.79%</div>
</body></html>
